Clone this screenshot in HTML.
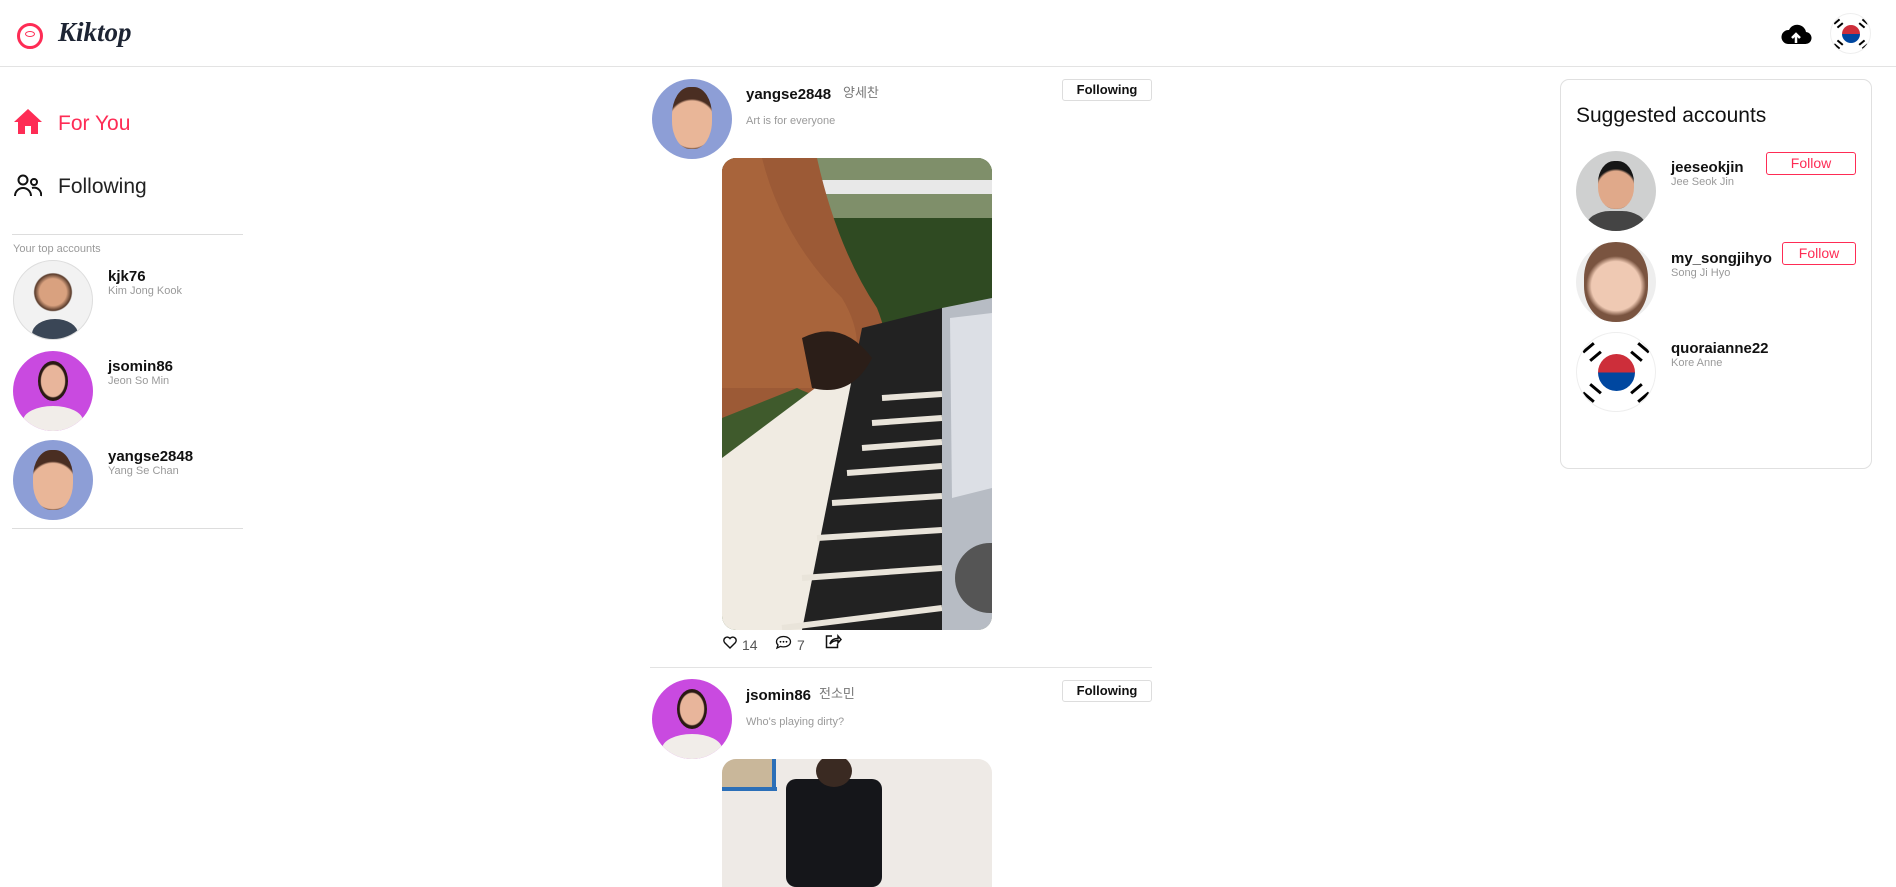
<!DOCTYPE html>
<html><head><meta charset="utf-8">
<style>
*{margin:0;padding:0;box-sizing:border-box}
body{width:1896px;height:887px;overflow:hidden;background:#fff;font-family:"Liberation Sans","Noto Sans CJK KR",sans-serif;color:#111;position:relative}
.abs{position:absolute}
.av{position:absolute;border-radius:50%;overflow:hidden}
.name{position:absolute;font-weight:bold;font-size:15px;color:#111}
.sub{position:absolute;font-size:11px;color:#9a9a9a}
.btn{position:absolute;border:1px solid #ddd;border-radius:3px;font-size:13px;font-weight:bold;text-align:center;background:#fff}
.fbtn{position:absolute;border:1px solid #fe2c55;border-radius:3px;font-size:14px;color:#fe2c55;text-align:center}
</style></head><body>
<!-- header -->
<div class="abs" style="left:0;top:66px;width:1896px;height:1px;background:#e3e3e3"></div>
<div class="abs" style="left:17px;top:23px;width:26px;height:26px;border:3px solid #fe2c55;border-radius:50%"></div>
<div class="abs" style="left:25px;top:31px;width:10px;height:6px;border:1px solid #fe2c55;border-radius:50%"></div>
<div class="abs" style="left:58px;top:17px;font-family:'Liberation Serif',serif;font-style:italic;font-weight:bold;font-size:27px;color:#1d2433">Kiktop</div>
<svg class="abs" style="left:1780px;top:20px" width="32" height="28" viewBox="0 0 32 28"><path d="M8 24h17a6 6 0 0 0 1-12 9 9 0 0 0-17-2 7 7 0 0 0-1 14z" fill="#000"/><path d="M16 23v-9m-4 4l4-4 4 4" stroke="#fff" stroke-width="2.5" fill="none"/></svg>
<div class="av" style="left:1830px;top:13px;width:41px;height:41px;border:1px solid #eee;background:#fff">
<div class="abs" style="left:11px;top:11px;width:18px;height:18px;border-radius:50%;background:linear-gradient(#cd2e3a 50%,#0047a0 50%)"></div>
<div class="abs" style="left:4px;top:6px;width:7px;height:7px;border-top:2px solid #000;border-bottom:2px solid #000;transform:rotate(-40deg)"></div>
<div class="abs" style="left:29px;top:6px;width:7px;height:7px;border-top:2px solid #000;border-bottom:2px solid #000;transform:rotate(40deg)"></div>
<div class="abs" style="left:4px;top:27px;width:7px;height:7px;border-top:2px solid #000;border-bottom:2px solid #000;transform:rotate(40deg)"></div>
<div class="abs" style="left:29px;top:27px;width:7px;height:7px;border-top:2px solid #000;border-bottom:2px solid #000;transform:rotate(-40deg)"></div>
</div>
<!-- sidebar -->
<svg class="abs" style="left:13px;top:108px" width="30" height="27" viewBox="0 0 30 27"><path d="M15 1L1 14h4v12h7v-8h6v8h7V14h4z" fill="#fe2c55"/></svg>
<div class="abs" style="left:58px;top:112px;font-size:21px;color:#fe2c55">For You</div>
<svg class="abs" style="left:14px;top:174px" width="28" height="24" viewBox="0 0 28 24" fill="none" stroke="#111" stroke-width="2"><circle cx="9" cy="6" r="4.5"/><path d="M1 22a8 8 0 0 1 16 0"/><circle cx="20" cy="8" r="3"/><path d="M18 14a7 7 0 0 1 9 8"/></svg>
<div class="abs" style="left:58px;top:175px;font-size:21px;color:#222">Following</div>
<div class="abs" style="left:12px;top:234px;width:231px;height:1px;background:#ddd"></div>
<div class="sub" style="left:13px;top:243px">Your top accounts</div>
<div class="av" style="left:13px;top:260px;width:80px;height:80px;border:1px solid #ddd;background:radial-gradient(circle at 50% 40%,#d9a17f 22%,#5a3c2c 30%,#f2f2f2 32%)"><div class="abs" style="left:18px;top:58px;width:46px;height:30px;border-radius:50%;background:#3a4656"></div></div>
<div class="name" style="left:108px;top:268px">kjk76</div><div class="sub" style="left:108px;top:285px">Kim Jong Kook</div>
<div class="av" style="left:13px;top:351px;width:80px;height:80px;background:#c94ae0"><div class="abs" style="left:25px;top:10px;width:30px;height:40px;border-radius:50%;background:radial-gradient(#e8b59b 55%,#2a1a14 60%)"></div><div class="abs" style="left:10px;top:55px;width:60px;height:30px;border-radius:50%;background:#f1ede9"></div></div>
<div class="name" style="left:108px;top:358px">jsomin86</div><div class="sub" style="left:108px;top:375px">Jeon So Min</div>
<div class="av" style="left:13px;top:440px;width:80px;height:80px;background:#8d9ed6"><div class="abs" style="left:20px;top:10px;width:40px;height:60px;border-radius:45%;background:radial-gradient(circle at 50% 60%,#e9b698 55%,#4a2e22 60%)"></div></div>
<div class="name" style="left:108px;top:448px">yangse2848</div><div class="sub" style="left:108px;top:465px">Yang Se Chan</div>
<div class="abs" style="left:12px;top:528px;width:231px;height:1px;background:#ddd"></div>
<!-- post 1 -->
<div class="av" style="left:652px;top:79px;width:80px;height:80px;background:#8d9ed6"><div class="abs" style="left:20px;top:8px;width:40px;height:62px;border-radius:45%;background:radial-gradient(circle at 50% 60%,#e9b698 55%,#4a2e22 60%)"></div></div>
<div class="name" style="left:746px;top:86px">yangse2848</div>
<div class="abs" style="left:843px;top:82px;font-size:13px;color:#777">양세찬</div>
<div class="sub" style="left:746px;top:115px">Art is for everyone</div>
<div class="btn" style="left:1062px;top:79px;width:90px;height:22px;line-height:20px">Following</div>
<svg class="abs" style="left:722px;top:158px;border-radius:14px" width="270" height="472" viewBox="0 0 270 472">
<rect width="270" height="472" fill="#3f5a2c"/>
<rect width="270" height="60" fill="#7f8f6a"/>
<rect x="100" y="22" width="170" height="14" fill="#e8e8e8"/>
<rect x="100" y="60" width="170" height="110" fill="#2f4a22"/>
<path d="M0 0h95q20 90 60 150 q20 50 0 80 q-40 20 -80 0 L0 260z" fill="#9c5a36"/>
<path d="M0 0h40q20 80 80 140 q30 50 0 90 L0 230z" fill="#b06a3f" opacity=".6"/>
<path d="M0 300 L160 180 L270 240 V472 H0z" fill="#f0ebe2"/>
<path d="M140 170 L220 150 L220 472 L80 472z" fill="#222"/>
<g stroke="#e9e4da" stroke-width="6"><path d="M60 470 L220 450"/><path d="M80 420 L220 410"/><path d="M95 380 L220 372"/><path d="M110 345 L220 338"/><path d="M125 315 L220 308"/><path d="M140 290 L220 284"/><path d="M150 265 L220 260"/><path d="M160 240 L220 236"/></g>
<path d="M220 150 L270 140 V472 H220z" fill="#b7bcc4"/>
<path d="M228 160 L270 155 V330 L230 340z" fill="#dcdfe5"/>
<circle cx="268" cy="420" r="35" fill="#555"/>
<path d="M80 180 q40 -20 70 20 q-20 40 -60 30z" fill="#2b1e18"/>
</svg>
<svg class="abs" style="left:723px;top:636px" width="14" height="13" viewBox="0 0 14 13"><path d="M7 12L1.5 6.5A3 3 0 0 1 7 2.5a3 3 0 0 1 5.5 4z" fill="none" stroke="#111" stroke-width="1.4"/></svg>
<div class="abs" style="left:742px;top:637px;font-size:14px;color:#555">14</div>
<svg class="abs" style="left:775px;top:635px" width="17" height="15" viewBox="0 0 17 15"><path d="M8.5 1.5c4 0 7 2.3 7 5.2s-3 5.2-7 5.2c-1 0-2-.1-3-.5L2 13l1-3C2 9 1.5 8 1.5 6.7c0-2.9 3-5.2 7-5.2z" fill="none" stroke="#111" stroke-width="1.3"/><circle cx="5.5" cy="6.8" r=".9"/><circle cx="8.5" cy="6.8" r=".9"/><circle cx="11.5" cy="6.8" r=".9"/></svg>
<div class="abs" style="left:797px;top:637px;font-size:14px;color:#555">7</div>
<svg class="abs" style="left:825px;top:634px" width="17" height="15" viewBox="0 0 17 15" fill="none" stroke="#111" stroke-width="1.5"><path d="M7 2H1.5v11.5h11V10"/><path d="M5 10c1-4 4-5.5 8-5.5V2l3 3.5-3 3.5V6.5c-3 0-6 1-8 3.5z"/></svg>
<div class="abs" style="left:650px;top:667px;width:502px;height:1px;background:#e3e3e3"></div>
<!-- post 2 -->
<div class="av" style="left:652px;top:679px;width:80px;height:80px;background:#c94ae0"><div class="abs" style="left:25px;top:10px;width:30px;height:40px;border-radius:50%;background:radial-gradient(#e8b59b 55%,#2a1a14 60%)"></div><div class="abs" style="left:10px;top:55px;width:60px;height:30px;border-radius:50%;background:#f1ede9"></div></div>
<div class="name" style="left:746px;top:687px">jsomin86</div>
<div class="abs" style="left:819px;top:683px;font-size:13px;color:#777">전소민</div>
<div class="sub" style="left:746px;top:716px">Who's playing dirty?</div>
<div class="btn" style="left:1062px;top:680px;width:90px;height:22px;line-height:20px">Following</div>
<svg class="abs" style="left:722px;top:759px;border-top-left-radius:14px;border-top-right-radius:14px" width="270" height="128" viewBox="0 0 270 128">
<rect width="270" height="128" fill="#eeeae6"/>
<rect x="0" y="0" width="50" height="30" fill="#c9b79a"/><rect x="0" y="28" width="55" height="4" fill="#2b6fb8"/><rect x="50" y="0" width="4" height="32" fill="#2b6fb8"/>
<rect x="64" y="20" width="96" height="108" rx="10" fill="#15161a"/>
<ellipse cx="112" cy="12" rx="18" ry="16" fill="#3a2a22"/>
</svg>
<!-- right card -->
<div class="abs" style="left:1560px;top:79px;width:312px;height:390px;border:1px solid #e0e0e0;border-radius:9px"></div>
<div class="abs" style="left:1576px;top:104px;font-size:21px;color:#111">Suggested accounts</div>
<div class="av" style="left:1576px;top:151px;width:80px;height:80px;background:#cfd0d0"><div class="abs" style="left:22px;top:10px;width:36px;height:48px;border-radius:45%;background:radial-gradient(circle at 50% 60%,#e0a98a 55%,#161616 62%)"></div><div class="abs" style="left:10px;top:60px;width:60px;height:40px;border-radius:40%;background:#444"></div></div>
<div class="name" style="left:1671px;top:159px">jeeseokjin</div><div class="sub" style="left:1671px;top:176px">Jee Seok Jin</div>
<div class="fbtn" style="left:1766px;top:152px;width:90px;height:23px;line-height:21px">Follow</div>
<div class="av" style="left:1576px;top:242px;width:80px;height:80px;background:#eee"><div class="abs" style="left:8px;top:0;width:64px;height:80px;border-radius:45%;background:radial-gradient(circle at 50% 55%,#efc9b3 45%,#7a5440 55%)"></div></div>
<div class="name" style="left:1671px;top:250px">my_songjihyo</div><div class="sub" style="left:1671px;top:267px">Song Ji Hyo</div>
<div class="fbtn" style="left:1782px;top:242px;width:74px;height:23px;line-height:21px">Follow</div>
<div class="av" style="left:1576px;top:332px;width:80px;height:80px;border:1px solid #eee;background:#fff">
<div class="abs" style="left:21px;top:21px;width:37px;height:37px;border-radius:50%;background:linear-gradient(#cd2e3a 50%,#0047a0 50%)"></div>
<div class="abs" style="left:8px;top:12px;width:14px;height:14px;border-top:3px solid #000;border-bottom:3px solid #000;transform:rotate(-40deg)"></div>
<div class="abs" style="left:56px;top:12px;width:14px;height:14px;border-top:3px solid #000;border-bottom:3px solid #000;transform:rotate(40deg)"></div>
<div class="abs" style="left:8px;top:53px;width:14px;height:14px;border-top:3px solid #000;border-bottom:3px solid #000;transform:rotate(40deg)"></div>
<div class="abs" style="left:56px;top:53px;width:14px;height:14px;border-top:3px solid #000;border-bottom:3px solid #000;transform:rotate(-40deg)"></div>
</div>
<div class="name" style="left:1671px;top:340px">quoraianne22</div><div class="sub" style="left:1671px;top:357px">Kore Anne</div>
</body></html>
